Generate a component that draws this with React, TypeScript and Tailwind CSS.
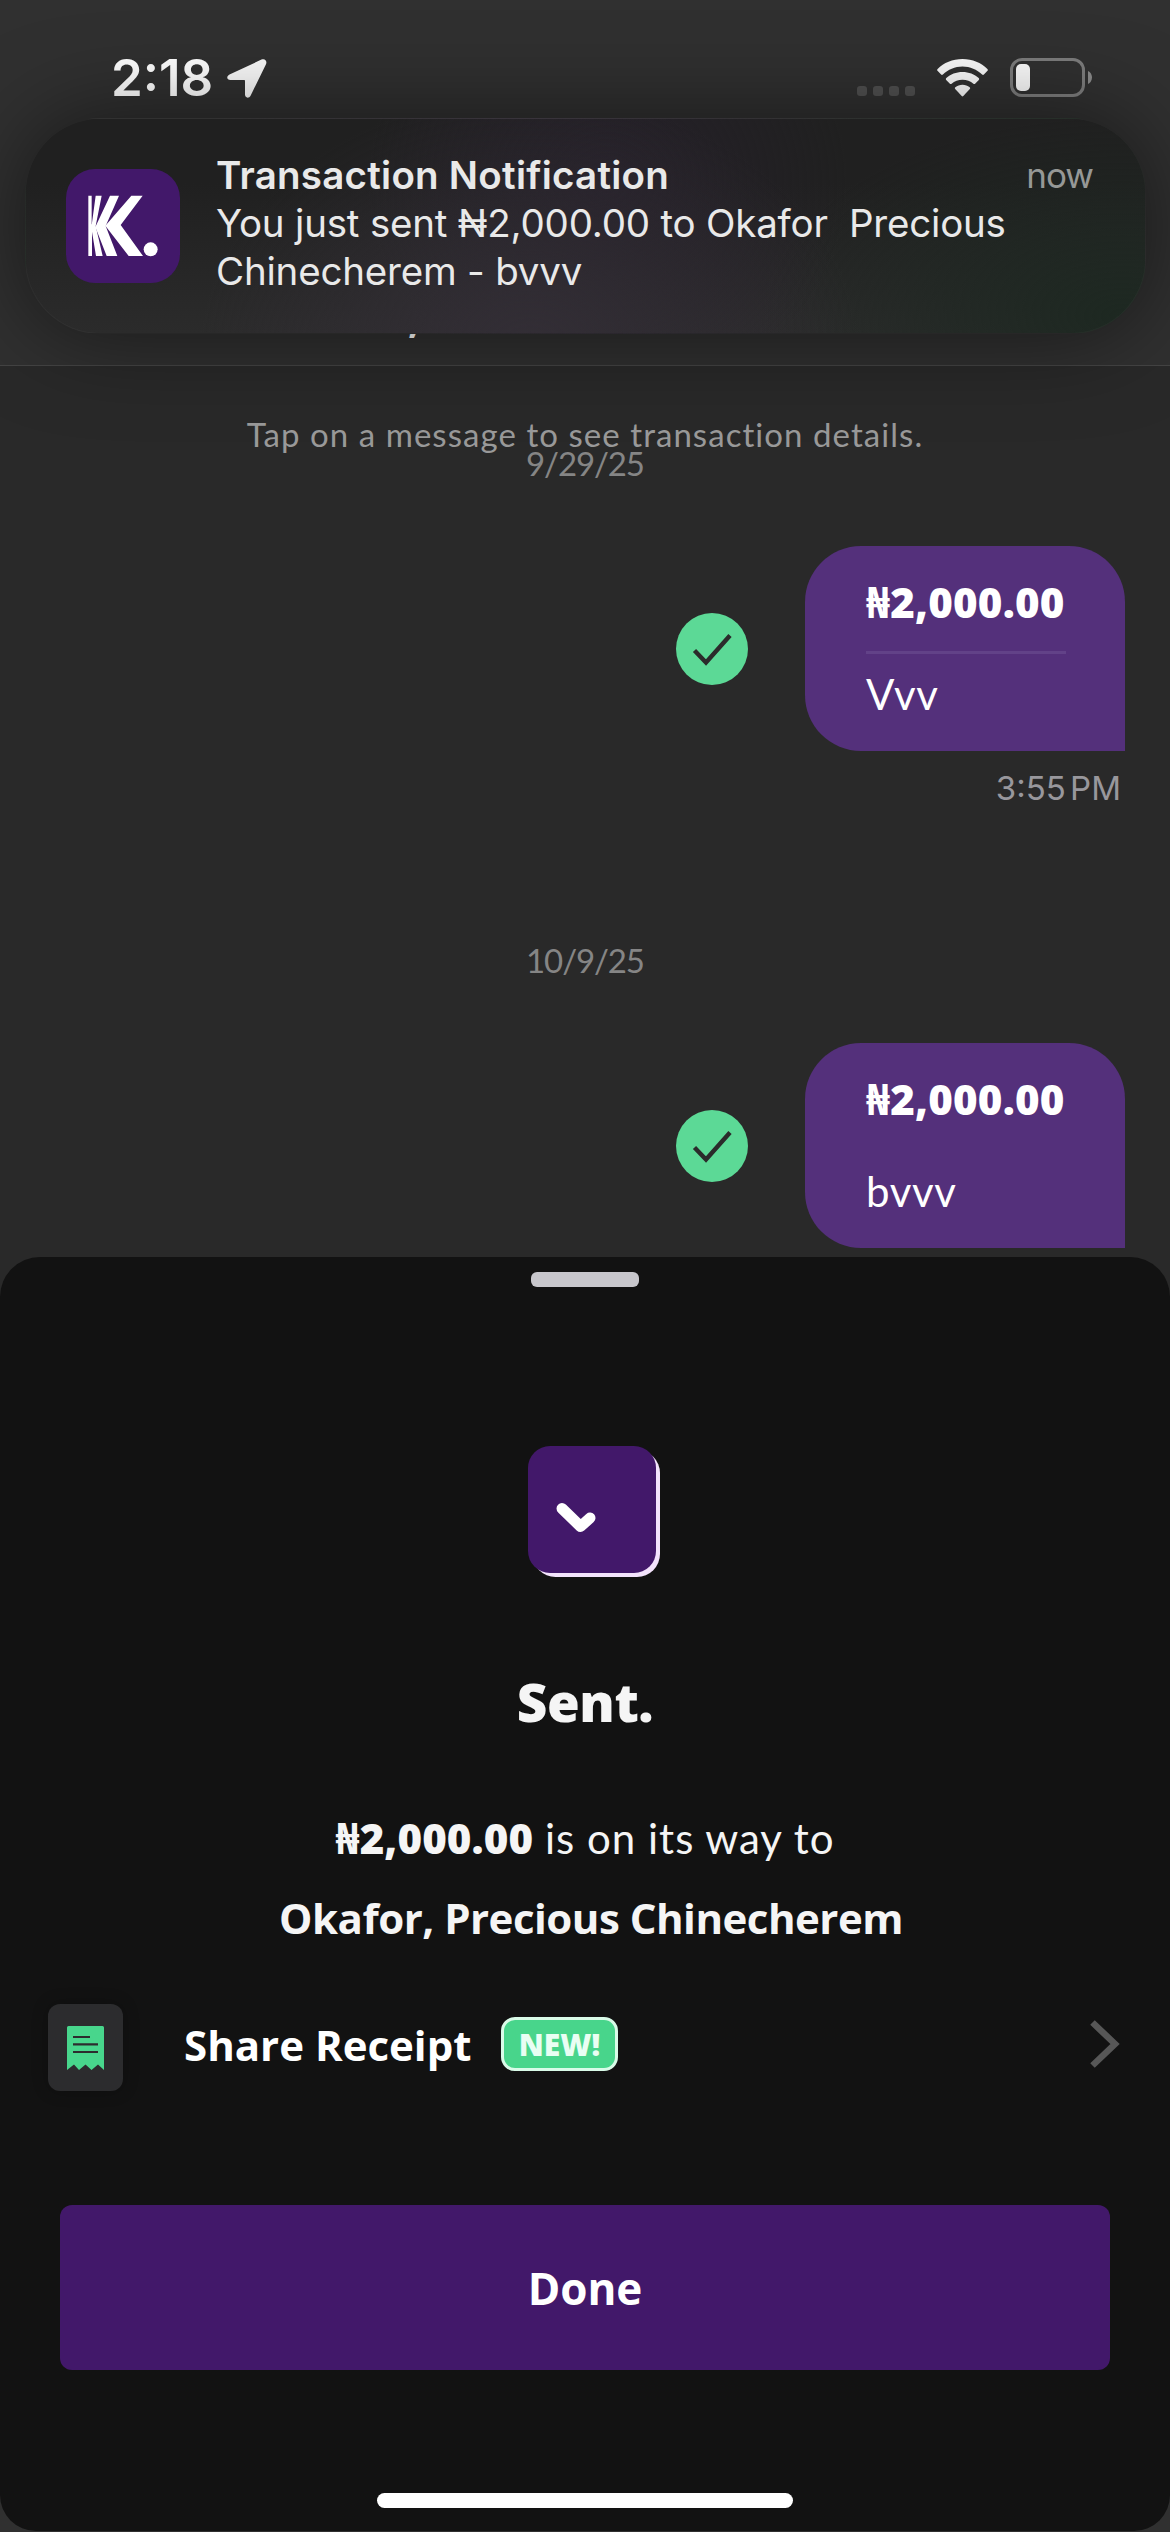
type Message = { date: string; amount: string; note: string; time?: string; divider: boolean }

const MESSAGES: Message[] = [
  { date: '9/29/25', amount: '₦2,000.00', note: 'Vvv', time: '3:55 PM', divider: true },
  { date: '10/9/25', amount: '₦2,000.00', note: 'bvvv', divider: false },
]

const INTER = "font-['Inter',sans-serif]"
const BODY = "font-['Lato','Open_Sans',sans-serif]"
const BOLD = "font-['Open_Sans','Noto_Sans',sans-serif]"

function StatusBar() {
  return (
    <div className={`${INTER} flex h-[118px] items-start pl-[111px] pr-[78px] pt-[53px]`}>
      <span className="w-[102px] whitespace-nowrap text-[51px] leading-[50px] font-semibold text-white">2:18</span>
      <svg className="ml-[14px] mt-[6px]" width="40" height="39" viewBox="0 0 40 39" fill="#fafafa">
        <path d="M34.500 .6 2.500 15.400C-1 17.200-.2 21 3.400 21H17c.6 0 1 .4 1 1v13.600c0 3.600 4 4.200 5.700.800L39 5.200C40.400 1.800 37.800-.9 34.500.6Z" />
      </svg>
      <div className="ml-auto mt-[33px] flex gap-[6px]">
        {[0, 1, 2, 3].map(i => <span key={i} className="h-[10px] w-[10px] rounded-[3px] bg-[#505050]" />)}
      </div>
      <svg className="ml-[22px] mt-[6px]" width="51" height="38" viewBox="0 0 51 38" fill="#fafafa">
        <path d="M25.500 0C35.500 0 44.200 3.800 50.400 9.900c.6.6.6 1.300.100 1.900l-3.600 3.800c-.5.5-1.200.5-1.800 0C40 10.700 33 7.600 25.500 7.600S11 10.700 5.900 15.600c-.6.5-1.300.5-1.800 0L.5 11.800c-.5-.6-.5-1.300.1-1.900C6.800 3.800 15.500 0 25.500 0Z" />
        <path d="M25.500 13c6.300 0 12 2.300 16.200 6.100.6.600.6 1.300.1 1.900l-3.700 3.700c-.5.5-1.200.5-1.700.1-2.900-2.500-6.700-4-10.900-4s-8 1.500-10.900 4c-.5.4-1.200.4-1.700-.1L9.200 21c-.5-.6-.5-1.300.1-1.900C13.500 15.300 19.200 13 25.500 13Z" />
        <path d="M25.500 25.700c2.800 0 5.200.9 7.200 2.500.6.500.6 1.200.1 1.800l-6.500 7.100c-.5.5-1.100.5-1.600 0L18.200 30c-.5-.6-.5-1.300.1-1.800 2-1.600 4.400-2.500 7.200-2.500Z" />
      </svg>
      <svg className="ml-[22px] mt-[5px]" width="82" height="39" viewBox="0 0 82 39">
        <rect x="1.500" y="1.500" width="72" height="36" rx="10.500" fill="none" stroke="#7c7c7c" strokeWidth="3" />
        <rect x="6" y="6" width="14" height="27" rx="5" fill="#fafafa" />
        <path d="M78 13c2.400 1 4 3.600 4 6.500s-1.600 5.500-4 6.500Z" fill="#8a8a8a" />
      </svg>
    </div>
  )
}

function AppIcon() {
  return (
    <div className="mt-[50px] h-[114px] w-[114px] shrink-0 rounded-[29px] bg-[#42186a]">
      <svg width="114" height="114" viewBox="18 27 342 342" fill="#fff">
        <path d="M214 107h34l-66 88 67 93h-43l-70-91Z" />
        <path d="M150 107h27l-40 91 35 90h-32l-34-87Z" />
        <path d="M107 107h18l-18 91 21 90h-20L94 203Z" />
        <path d="M85 107h10v85l6 10-5 10v76H85Z" />
        <circle cx="272" cy="268" r="21" />
      </svg>
    </div>
  )
}

function Notification() {
  return (
    <div className={`${INTER} absolute left-[25px] top-[118px] z-10 flex h-[216px] w-[1121px] rounded-[75px] border border-white/[0.03] bg-[#222222] bg-[radial-gradient(ellipse_330px_260px_at_45%_110%,#332e36,transparent),radial-gradient(ellipse_240px_220px_at_52%_30%,#252029,transparent),radial-gradient(ellipse_360px_200px_at_98%_92%,#1d2821,transparent),linear-gradient(#202020_30%,#2b2b2b)] pl-[40px] pr-[52px] shadow-[0_0_90px_rgba(0,0,0,0.5)]`}>
      <AppIcon />
      <div className="ml-[36px] flex-1 pt-[32px] text-[38.5px] leading-[48px] tracking-[-0.2px] text-[#e9e9e9]">
        <div className="flex justify-between">
          <span className="font-semibold tracking-[0.25px]">Transaction Notification</span>
          <span className="text-[35px] tracking-[-1px] text-[#969896]">now</span>
        </div>
        <div className="whitespace-pre">You just sent ₦2,000.00 to Okafor  Precious</div>
        <div>Chinecherem - bvvv</div>
      </div>
    </div>
  )
}

function Bubble({ m }: { m: Message }) {
  return (
    <div className="mt-[63px]">
      <div className="flex items-center justify-end gap-[57px] pr-[45px]">
        <svg width="72" height="72" viewBox="0 0 72 72">
          <circle cx="36" cy="36" r="36" fill="#5cd996" />
          <path d="M18.500 37.500 30 49.500 54 22.500" fill="none" stroke="#2b2b2b" strokeWidth="4.400" />
        </svg>
        <div className="flex h-[205px] w-[320px] flex-col rounded-[56px] rounded-br-none bg-[#54307b] px-[61px] pt-[26px] text-[42px] text-white">
          <div className={`${BOLD} whitespace-nowrap font-extrabold leading-[60px] tracking-[0.2px]`}>{m.amount}</div>
          <div className={m.divider ? 'mt-[19px] h-[3px] w-[200px] bg-[#624288]' : 'mt-[19px] h-[3px] w-[200px]'} />
          <div className={`${BODY} mt-[10px] leading-[60px] tracking-[0.6px]`}>{m.note}</div>
        </div>
      </div>
      {m.time && (
        <div className={`${INTER} mt-[17px] pr-[49px] text-right text-[33px] leading-[40px] text-[#98979c] [word-spacing:-5px]`}>{m.time}</div>
      )}
    </div>
  )
}

function ShareRow() {
  return (
    <div className="mt-[46px] flex h-[87px] items-center pl-[48px] pr-[50px]">
      <div className="flex h-[87px] w-[75px] items-center justify-center rounded-[12px] bg-[#2c2c2e] shadow-[0_0_16px_rgba(0,0,0,0.25)]">
        <svg width="37" height="44" viewBox="0 0 37 44">
          <path d="M1.500 0h34q1.500 0 1.500 1.500V44l-6-5.500L24.500 44l-6-5.500L12 44l-5-5.500L0 44V1.500Q0 0 1.500 0Z" fill="#48d68c" />
          <path d="M6 11h17M6 18.300h25M6 26h25" stroke="#2c2c2e" strokeWidth="2.200" />
        </svg>
      </div>
      <span className={`${BOLD} mb-[6px] ml-[61px] w-[317px] whitespace-nowrap text-[42px] font-bold text-white`}>Share Receipt</span>
      <span className="mb-[7px] flex h-[54px] w-[117px] items-center justify-center rounded-[14px] border-[3px] border-[#d9fbe8] bg-[#48d58b] font-['Open_Sans',sans-serif] text-[30px] font-extrabold text-[#e9fef3]">NEW!</span>
      <svg className="ml-auto -mt-[8px]" width="30" height="48" viewBox="0 0 30 48">
        <path d="M2.500 2.500 25 24 2.500 45.500" fill="none" stroke="#575757" strokeWidth="6.500" />
      </svg>
    </div>
  )
}

function Sheet() {
  return (
    <div className="absolute left-0 top-[1257px] z-10 flex h-[1274px] w-[1170px] flex-col rounded-t-[40px] rounded-b-[36px] bg-[#121212] text-[#f5f5f5]">
      <div className="mt-[15px] h-[15px] w-[108px] self-center rounded-[6px] bg-[#c8c7cc]" />
      <svg className="ml-[528px] mt-[159px]" width="132" height="131" viewBox="0 0 132 131">
        <rect x="4.500" y="4" width="127.500" height="127" rx="23" fill="#f3e3fc" />
        <rect width="128" height="127" rx="22" fill="#42186a" />
        <path d="M34 62.500 52.500 80.500 62 72" fill="none" stroke="#fff" strokeWidth="11" strokeLinecap="round" strokeLinejoin="round" />
      </svg>
      <div className={`${BOLD} mt-[93px] text-center text-[53px] font-extrabold leading-[64px] tracking-[-0.4px]`}>Sent.</div>
      <div className={`${BODY} mt-[64px] text-center text-[42px] leading-[80px]`}>
        <span className={`${BOLD} font-extrabold tracking-[0.1px]`}>₦2,000.00</span>
        <span className="tracking-[1px]"> is on its way to</span>
        <div className={`${BOLD} pl-[12px] font-bold tracking-[-0.5px]`}>Okafor, Precious Chinecherem</div>
      </div>
      <ShareRow />
      <button className={`${BOLD} mx-[60px] mt-[114px] h-[165px] rounded-[12px] bg-[#42186a] text-[44px] font-bold text-white`}>Done</button>
      <div className="mt-[123px] h-[15px] w-[416px] self-center rounded-full bg-white" />
    </div>
  )
}

export default function App() {
  return (
    <div className="relative flex h-[2532px] w-[1170px] flex-col overflow-hidden bg-[#303030]">
      <div className="h-[366px] border-b border-[#444444]">
        <StatusBar />
        <div className={`${BOLD} mt-[174px] ml-[408px] text-[42px] font-bold leading-[50px] text-white`}>,</div>
      </div>
      <div className="h-[1700px] bg-[#292929] pt-[48px]">
        <div className={`${BODY} text-center text-[33px] leading-[40px] tracking-[1.05px] text-[#999999]`}>
          Tap on a message to see transaction details.
        </div>
        {MESSAGES.map((m, i) => (
          <div key={m.date} className={i === 0 ? '-mt-[11px]' : 'mt-[132px]'}>
            <div className={`${BODY} text-center text-[33px] leading-[40px] tracking-[-1.1px] text-[#858585]`}>{m.date}</div>
            <Bubble m={m} />
          </div>
        ))}
      </div>
      <Notification />
      <Sheet />
    </div>
  )
}
